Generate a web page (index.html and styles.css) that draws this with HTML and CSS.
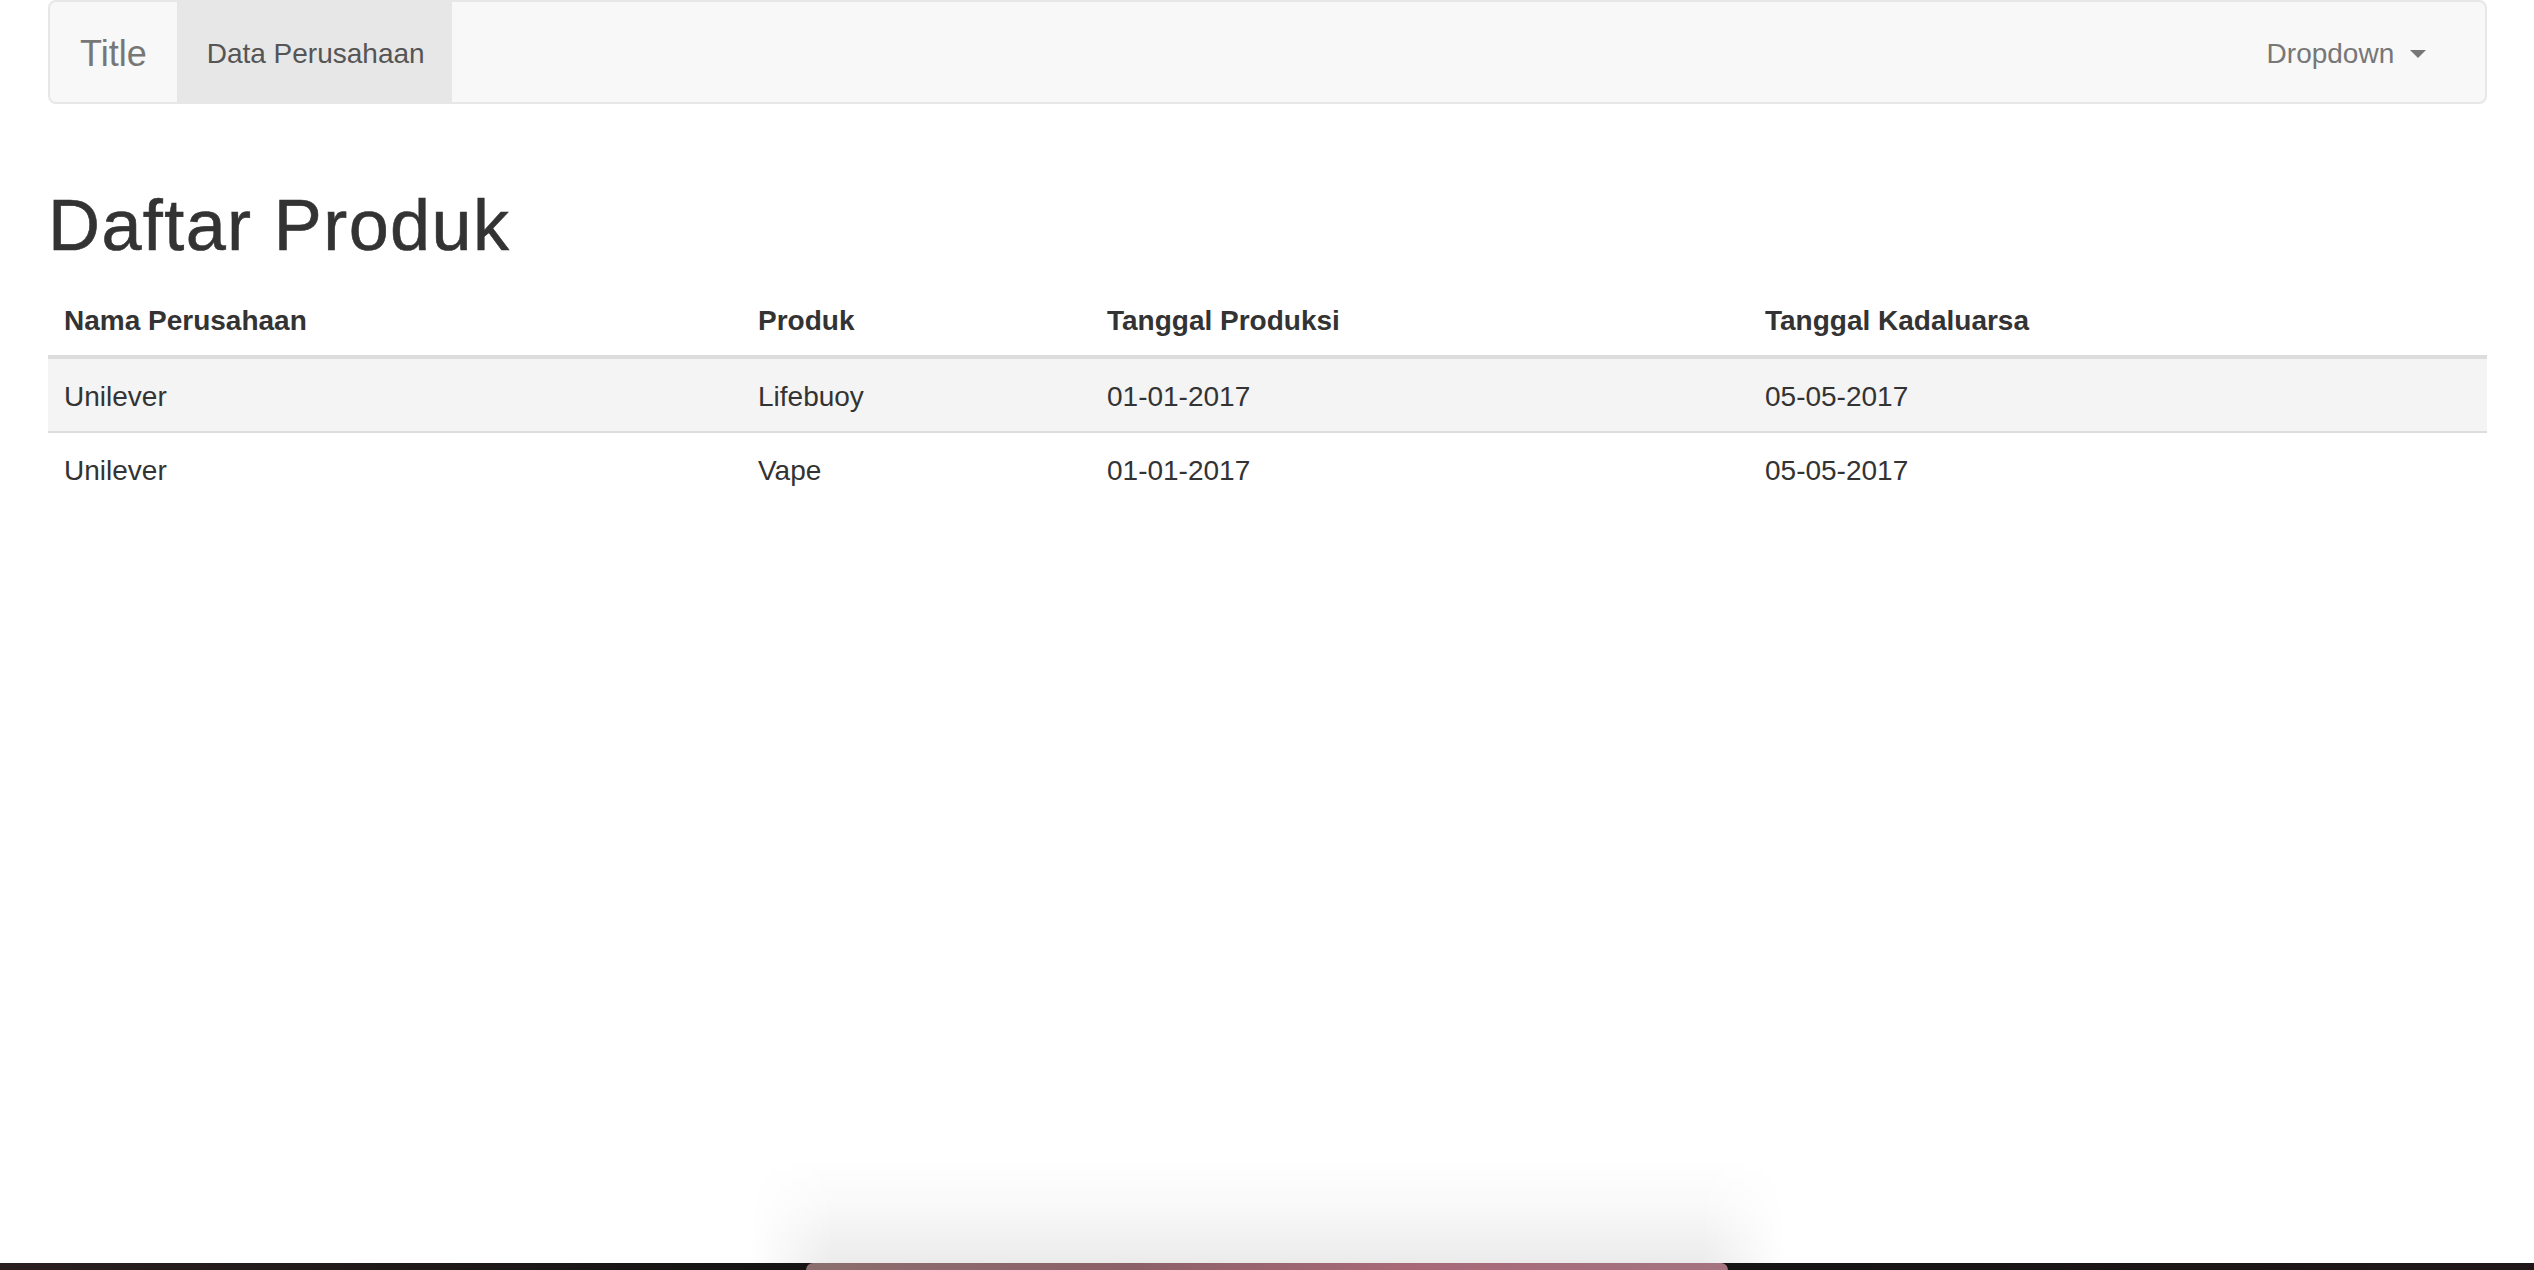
FILE: index.html
```html
<!DOCTYPE html>
<html lang="id">
<head>
<meta charset="utf-8">
<title>Daftar Produk</title>
<link rel="stylesheet" href="styles.css">
</head>
<body>
<div class="page">
  <nav class="navbar">
    <a class="brand" href="#">Title</a>
    <ul class="nav">
      <li class="nav-item active"><a href="#">Data Perusahaan</a></li>
    </ul>
    <ul class="nav nav-right">
      <li class="nav-item"><a href="#">Dropdown <span class="caret"></span></a></li>
    </ul>
  </nav>

  <h1 class="title">Daftar Produk</h1>

  <table class="table">
    <colgroup>
      <col class="c1"><col class="c2"><col class="c3"><col class="c4">
    </colgroup>
    <thead>
      <tr>
        <th>Nama Perusahaan</th>
        <th>Produk</th>
        <th>Tanggal Produksi</th>
        <th>Tanggal Kadaluarsa</th>
      </tr>
    </thead>
    <tbody>
      <tr>
        <td>Unilever</td>
        <td>Lifebuoy</td>
        <td>01-01-2017</td>
        <td>05-05-2017</td>
      </tr>
      <tr>
        <td>Unilever</td>
        <td>Vape</td>
        <td>01-01-2017</td>
        <td>05-05-2017</td>
      </tr>
    </tbody>
  </table>
</div>

<div class="dock-edge">
  <div class="dock-shadow"></div>
  <div class="dock-tab"></div>
</div>
</body>
</html>
```

FILE: styles.css
```css
html, body {
  margin: 0;
  padding: 0;
  background: #ffffff;
}

body {
  font-family: "Liberation Sans", Arial, Helvetica, sans-serif;
  color: #333333;
  font-size: 28px;
  line-height: 40px;
  height: 1270px;
  overflow: hidden;
}

.page {
  padding: 0 47px 0 48px;
}

.navbar {
  display: flex;
  align-items: stretch;
  height: 100px;
  background: #f8f8f8;
  border: 2px solid #e7e7e7;
  border-radius: 8px;
}

.brand {
  display: block;
  padding: 4px 30px 0;
  font-size: 36px;
  line-height: 96px;
  color: #777777;
  text-decoration: none;
}

.nav {
  display: flex;
  margin: 0;
  padding: 0;
  list-style: none;
}

.nav-right {
  margin-left: auto;
  margin-right: 29px;
}

.nav-item a {
  display: block;
  padding: 4px 30px 0;
  line-height: 96px;
  font-size: 28px;
  color: #777777;
  text-decoration: none;
}

.nav-item.active a {
  background: #e7e7e7;
  color: #555555;
  padding-right: 27px;
}

.caret {
  display: inline-block;
  width: 0;
  height: 0;
  margin-left: 8px;
  vertical-align: middle;
  border-top: 8px solid #777777;
  border-left: 8px solid transparent;
  border-right: 8px solid transparent;
  position: relative;
  top: -2px;
}

.title {
  margin: 82px 0 18px;
  font-size: 72px;
  line-height: 79px;
  font-weight: 500;
  letter-spacing: 1.4px;
  -webkit-text-stroke: 0.6px #333333;
  color: #333333;
}

.table {
  width: 100%;
  border-collapse: collapse;
  border-spacing: 0;
}

.c1 { width: 694px; }
.c2 { width: 349px; }
.c3 { width: 658px; }
.c4 { width: auto; }

.table th,
.table td {
  padding: 18px 16px 14px;
  text-align: left;
  vertical-align: top;
  line-height: 40px;
}

.table th {
  font-weight: bold;
  border-bottom: 4px solid #dddddd;
}

.table td {
  border-top: 2px solid #dddddd;
}

.table tbody tr:nth-child(odd) {
  background: #f4f4f4;
}

.dock-edge {
  position: fixed;
  left: 0;
  right: 0;
  bottom: 0;
  height: 7px;
  background: linear-gradient(to right, #2a1e20, #161414 30%, #161414 70%, #20161a);
}

.dock-shadow {
  position: absolute;
  left: 750px;
  width: 1035px;
  bottom: 7px;
  height: 105px;
  background: linear-gradient(to bottom, rgba(0,0,0,0), rgba(0,0,0,0.025) 45%, rgba(0,0,0,0.08));
  -webkit-mask-image: linear-gradient(to right, transparent, #000 8%, #000 92%, transparent);
  mask-image: linear-gradient(to right, transparent, #000 8%, #000 92%, transparent);
}

.dock-tab {
  position: absolute;
  left: 806px;
  width: 922px;
  bottom: 0;
  height: 7px;
  border-radius: 7px 7px 0 0;
  background: linear-gradient(to right, #8c6e6e, #8c6068 35%, #a86878 65%, #a47480);
}
```
